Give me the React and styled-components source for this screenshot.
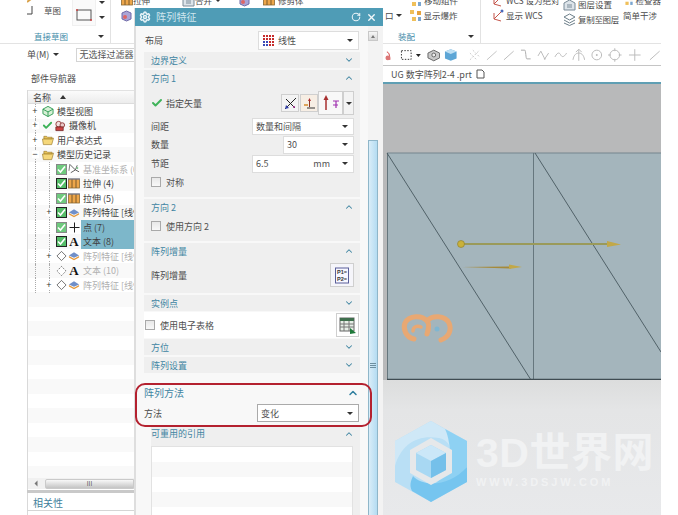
import React from 'react';
import styled, { createGlobalStyle } from 'styled-components';
import { Settings, RotateCw, X, ChevronDown, ChevronUp, Check } from 'lucide-react';

const Global = createGlobalStyle`
  html, body { margin: 0; padding: 0; background: #fff; }
  #root { width: 678px; height: 515px; overflow: hidden; }
  * { box-sizing: border-box; }
`;

const FONT = `"Noto Sans CJK SC", "Liberation Sans", sans-serif`;

const Page = styled.div`
  position: relative; width: 678px; height: 515px; overflow: hidden; background: #fff;
  font-family: ${FONT}; font-size: 9px; color: #4a4a4a; line-height: 1;
  display: flex; flex-direction: column;
`;

/* ribbon */
const Ribbon = styled.div`
  height: 44px; width: 661px; flex: none; display: flex; overflow: hidden; border-bottom: 1px solid #e3e3e3; font-size: 8.5px;
`;
const Group = styled.div`
  width: ${p => p.$w}px; flex: none; height: 51px; margin-top: -7px; display: flex; flex-direction: column;
  border-right: ${p => (p.$sep ? '1px solid #e2e2e2' : 'none')}; position: relative;
  padding-left: ${p => p.$pl || 0}px;
`;
const GroupBody = styled.div`
  height: 35px; display: flex; flex: none;
`;
const ToolCol = styled.div`
  width: ${p => p.$w}px; flex: none; display: flex; flex-direction: column; padding-top: ${p => p.$pt || 0}px;
`;
const ToolRow = styled.div`
  height: 15px; display: flex; align-items: center; gap: ${p => p.$gap ?? 2}px; white-space: nowrap; color: #4b4b4b;
  padding-left: ${p => p.$pl || 0}px;
`;
const Spacer = styled.span`
  width: ${p => p.$w}px; flex: none;
`;
const GroupLabel = styled.div`
  height: 16px; display: flex; align-items: center; color: #3e8aa8; padding-left: ${p => p.$pl || 0}px;
`;
const Grow = styled.span` flex: 1; `;
const Caret = styled.span`
  width: 0; height: 0; border-left: 3px solid transparent; border-right: 3px solid transparent;
  border-top: 3px solid #333; display: inline-block; flex: none; margin-right: ${p => p.$mr || 0}px; margin-left: ${p => p.$ml || 0}px;
`;
const SketchBtn = styled.div`
  width: 39px; flex: none; display: flex; flex-direction: column; align-items: center; padding-top: 13px;
  padding-left: 0;
`;
const RectBtn = styled.div`
  width: 24px; height: 33px; flex: none; background: #fafafa; border: 1px solid #f0f0f0; display: flex;
  align-items: center; justify-content: center; padding-top: 9px;
`;
const Arrows = styled.div`
  width: 12px; display: flex; flex-direction: column; align-items: center; gap: 12px; padding-top: 8px;
`;

/* work area */
const Work = styled.div`
  flex: 1; display: flex; min-height: 0;
`;
const Navigator = styled.div`
  width: 134px; flex: none; display: flex; flex-direction: column; padding-left: 27px;
`;
const MenuRow = styled.div`
  height: 21px; padding: 0; display: flex; align-items: center; gap: 4px; flex: none; white-space: nowrap;
`;
const FilterBox = styled.div`
  width: 70px; height: 14px; margin-left: 13px; border: 1px solid #d4d4d4; color: #555; padding: 0 2px;
  display: flex; align-items: center; white-space: nowrap; overflow: hidden; flex: none;
`;
const NavTitle = styled.div`
  height: 25px; flex: none; display: flex; align-items: center; padding-left: 4px; padding-top: 1px; color: #4a4a4a;
`;
const NavBox = styled.div`
  flex: 1; display: flex; flex-direction: column; border-left: 1px solid #d9d9d9; min-height: 0;
`;
const ColHead = styled.div`
  height: 14px; flex: none; display: flex; align-items: center; gap: 9px; padding-left: 5px;
  background: linear-gradient(#fbfbfb, #ececec); border-top: 1px solid #e2e2e2; border-bottom: 1px solid #dcdcdc;
`;
const UpTri = styled.span`
  width: 0; height: 0; border-left: 3px solid transparent; border-right: 3px solid transparent;
  border-bottom: 4px solid #333;
`;
const Tree = styled.div`
  height: 374px; flex: none; overflow: hidden;
  background: repeating-linear-gradient(#fff 0 14.5px, #f9f9f9 14.5px 29px);
`;
const Row = styled.div`
  height: 14.5px; display: flex; align-items: center; white-space: nowrap;
`;
const Guide = styled.span`
  width: 14px; height: 100%; flex: none; position: relative; display: flex; align-items: center; justify-content: center;
  &::before {
    content: ''; position: absolute; left: 7px; top: 0; bottom: 0;
    border-left: 1px dotted ${p => (p.$on ? '#aaa' : 'transparent')};
  }
`;
const Expander = styled.span`
  position: relative; z-index: 1; width: 7px; height: 7px; background: #fff; display: block;
  color: #333; font-size: 9px; line-height: 7px; text-align: center; font-family: "Liberation Sans", sans-serif;
`;
const RowIcon = styled.span`
  width: ${p => p.$w || 12}px; height: 12px; flex: none; display: flex; align-items: center; justify-content: center;
  margin-right: 1px;
`;
const RowText = styled.span`
  padding: 2px; flex: 1; color: ${p => (p.$dim ? '#b0b0b0' : '#3f3f3f')};
  background: ${p => (p.$sel ? '#7db7ca' : 'transparent')}; height: 14.5px; display: flex; align-items: center; overflow: hidden;
`;
const HScroll = styled.div`
  height: 11px; flex: none; display: flex; align-items: center; background: #f1f1f1; padding-left: 5px; gap: 6px;
`;
const HThumb = styled.div`
  flex: 1; height: 10px; background: linear-gradient(#f8f8f8, #c4c4c4); border: 1px solid #cacaca; color: #555;
  border-radius: 2px 0 0 2px; display: flex; align-items: center; justify-content: center; font-size: 6px;
`;
const Splitter = styled.div`
  height: 3px; flex: none; background: #c9c9c9; margin: 1px 0 0 -1px;
`;
const SideTab = styled.div`
  height: 18px; flex: none; margin: 0 0 0 -1px; border-bottom: 1px solid #d5d5d5; color: #3f7f9c; font-size: 10px;
  display: flex; align-items: center; padding: 3px 0 0 6px;
`;

/* graphics */
const Graphics = styled.div`
  width: 527px; flex: none; display: flex; flex-direction: column; min-height: 0; position: relative;
`;
const Strip = styled.div`
  height: 22px; flex: none; padding: 0 0 0 250px; display: flex; align-items: center; gap: 3px; border-bottom: 1px solid #c5c5c5; width: 527px; overflow: hidden;
`;
const Tabs = styled.div`
  height: 16px; flex: none; padding-left: 257px; display: flex; align-items: center; gap: 4px; color: #505050; font-size: 9px;
`;
const Canvas = styled.div`
  flex: 1; display: flex; flex-direction: column; border-top: 2px solid #5f9fb4; min-height: 0;
  background: #e4e5e7;
`;
const Model = styled.svg`
  display: block; width: 527px; height: 296px; flex: none;
`;
const Lower = styled.div`
  flex: 1; background: linear-gradient(#dcdddd, #e4e5e6 30px, #e8e9eb);
`;
const Watermark = styled.div`
  position: absolute; left: 261px; top: 377px; display: flex; gap: 9px; pointer-events: none;
`;
const MarkText = styled.div`
  display: flex; flex-direction: column; padding-top: 10px;
`;
const MarkBig = styled.div`
  font-family: "Liberation Sans", "Noto Sans CJK SC", sans-serif; font-weight: 700; font-size: 41px; line-height: 44px; color: #f1f2f3; white-space: nowrap;
  letter-spacing: 0.5px;
`;
const MarkUrl = styled.div`
  font-family: "Liberation Sans", sans-serif; font-size: 11px; line-height: 12px; color: #f1f2f3; letter-spacing: 2.9px; white-space: nowrap; font-weight: 700; margin-top: 1px;
`;

/* dialog */
const Dialog = styled.div`
  position: absolute; left: 134px; top: 8px; width: 249px; height: 507px; display: flex; flex-direction: column;
  background: #f8f8f8; border-left: 2px solid #dedede;
`;
const TitleBar = styled.div`
  height: 18px; flex: none; margin-left: -1px; background: #4f9cb6; color: #cfe6ee; display: flex; align-items: center; padding: 0 6px 0 4px; font-size: 10px; gap: 5px;
`;
const TitleText = styled.span` flex: 1; letter-spacing: 0.2px; `;
const DialogBody = styled.div`
  flex: 1; display: flex; min-height: 0;
`;
const Content = styled.div`
  width: 232px; flex: none; padding: 5px 8px 0 8px; display: flex; flex-direction: column;
`;
const FieldRow = styled.div`
  height: ${p => p.$h || 19}px; flex: none; display: flex; align-items: center; justify-content: space-between;
  padding-right: ${p => p.$pr || 0}px; padding-left: ${p => p.$pl || 0}px; margin-top: ${p => p.$mt || 0}px;
`;
const Select = styled.div`
  width: ${p => p.$w}px; height: ${p => p.$h || 18}px; flex: none; background: #fff; border: 1px solid ${p => (p.$dark ? '#aaa' : '#ddd')};
  display: flex; align-items: center; padding: 0 5px 0 3px; gap: 3px; color: #505050; white-space: nowrap;
`;
const SelectText = styled.span` flex: 1; display: flex; align-items: center; gap: 3px; `;
const Unit = styled.span` margin-right: 9px; `;
const Section = styled.section`
  background: #efefef; margin-top: ${p => p.$mt ?? 2}px; height: ${p => p.$h}px; flex: none; padding: 0 6px 0 7px;
`;
const SectionHead = styled.div`
  height: ${p => p.$h || 16}px; display: flex; align-items: center; justify-content: space-between; color: #3f85a2;
  font-size: 9px;
`;
const Body = styled.div`
  display: flex; flex-direction: column; padding-top: 3px;
`;
const VectorTools = styled.div`
  display: flex; align-items: center;
`;
const IconBtn = styled.div`
  width: ${p => p.$w || 18}px; height: ${p => p.$h || 18}px; flex: none; border: 1px solid #cfcfcf; background: ${p => p.$bg || '#f3f3f3'};
  display: flex; align-items: center; justify-content: center; margin-right: ${p => p.$mr || 0}px;
`;
const CheckLine = styled.label`
  display: flex; align-items: center; gap: 5px; color: #505050; height: ${p => p.$h || 14}px; flex: none; padding-left: ${p => p.$pl || 0}px;
`;
const Box = styled.span`
  width: 10px; height: 10px; flex: none; border: 1px solid #a9a9a9; background: linear-gradient(#e8e8e8, #f8f8f8);
`;
const WhiteRow = styled.div`
  height: 26px; background: #fff; margin-top: 1px; display: flex; align-items: center; justify-content: space-between; padding-right: 1px; flex: none;
`;
const Annotated = styled.section`
  position: relative; z-index: 1; flex: none; width: 237px; height: 44px; margin: 10px 0 0 -9px; padding: 0 11px 0 7px;
  border: 2px solid #b4212f; border-radius: 10px;
`;
const AnnotatedHead = styled.div`
  height: 16px; display: flex; align-items: center; justify-content: space-between; color: #3f85a2; font-size: 10px;
`;
const RefSection = styled.section`
  flex: 1; background: #efefef; margin: 0 0 0 7px; min-height: 0; width: 209px; padding-top: 1px;
`;
const RefHead = styled.div`
  height: 11px; display: flex; align-items: center; justify-content: space-between; color: #3f85a2; padding-right: 6px;
`;
const RefList = styled.div`
  height: 80px; width: 202px; margin-top: 7px; background: repeating-linear-gradient(#fff 0 15px, #f8f8f8 15px 30px); border: 1px solid #e2e2e2;
`;
const ScrollCol = styled.div`
  width: 15px; flex: none; display: flex; flex-direction: column; padding: 5px 0 0 0; background: #f3f3f3;
`;
const ScrollUp = styled.div`
  width: 10px; height: 10px; background: linear-gradient(#f6f6f6, #d9d9d9); border: 1px solid #c8c8c8; display: flex; align-items: center; justify-content: center; flex: none;
`;
const ThumbUp = styled.span`
  width: 0; height: 0; border-left: 2px solid transparent; border-right: 2px solid transparent; border-bottom: 3px solid #777;
`;
const Thumb = styled.div`
  width: 10px; flex: 1; margin-top: 99px; background: linear-gradient(90deg, #d9edf8, #b4dcf2); border: 1px solid #8fb6c9; border-bottom: 0;
  display: flex; flex-direction: column; align-items: center; padding-top: 222px; gap: 1px;
`;
const Grip = styled.span` width: 6px; height: 1px; background: #6d8f9f; flex: none; `;
const GlyphA = styled.span`
  font-family: "Liberation Serif", serif; font-weight: 700; font-size: 13px; color: #111;
`;
const VectorLabel = styled.span`
  display: flex; align-items: center; gap: 3px;
`;

/* icons */
const Tick = ({ dim }) => (
  <svg width="11" height="11" viewBox="0 0 11 11">
    <rect x=".5" y=".5" width="10" height="10" fill={dim ? '#6fca7e' : '#55bd68'} stroke={dim ? '#888' : '#222'} />
    <path d="M2 5.500 4.500 8 9 2.500" fill="none" stroke="#fff" strokeWidth="1.600" />
  </svg>
);
const Diamond = ({ dash }) => (
  <svg width="12" height="12" viewBox="0 0 12 12">
    <path d="M6 1 11 6 6 11 1 6Z" fill="#fff" stroke="#444" strokeWidth=".8" strokeDasharray={dash ? '1.500 1.200' : undefined} />
  </svg>
);
const Folder = () => (
  <svg width="13" height="12" viewBox="0 0 13 12">
    <path d="M2 2h3l1 1h5v2H2Z" fill="#e8c35a" stroke="#8a6a1e" strokeWidth=".6" />
    <path d="M.5 5h10l2-1-2 7h-9Z" fill="#f5d77a" stroke="#9a7a26" strokeWidth=".7" />
  </svg>
);
const Cube3 = () => (
  <svg width="13" height="12" viewBox="0 0 13 12">
    <path d="M6.500 1 12 4v5l-5.500 3L1 9V4Z" fill="#d7f0d6" stroke="#2f9a52" />
    <path d="M1 4l5.500 3L12 4M6.500 7v5" fill="none" stroke="#2f9a52" />
  </svg>
);
const Camera = () => (
  <svg width="13" height="12" viewBox="0 0 13 12">
    <circle cx="5" cy="4" r="3" fill="#f2e0e0" stroke="#913a3a" strokeWidth="1" />
    <circle cx="9" cy="5" r="2.500" fill="#e9c9c9" stroke="#913a3a" strokeWidth="1" />
    <path d="M2 7h8v4H2Z" fill="#c44" stroke="#6d2020" strokeWidth=".8" />
  </svg>
);
const Extrude = () => (
  <svg width="12" height="11" viewBox="0 0 12 11">
    <rect x=".5" y="1" width="11" height="9" fill="#eda64a" stroke="#8b6a33" strokeWidth=".8" />
    <path d="M4 1v9M8 1v9" stroke="#7a5a2a" strokeWidth="1" />
    <path d="M0 1h12" stroke="#6f7fa6" strokeWidth="1" />
  </svg>
);
const PatternIco = () => (
  <svg width="13" height="10" viewBox="0 0 13 10">
    <path d="M6.500 1 12 4.500 6.500 7 1 4.500Z" fill="#6f8fc9" />
    <path d="M1 5l5.500 3L12 5v1.500L6.500 9.500 1 6.500Z" fill="#e39a3f" />
  </svg>
);
const Csys = () => (
  <svg width="13" height="12" viewBox="0 0 13 12">
    <path d="M2 1 8 7 3 10M8 7l4 2M8 7l2-5" fill="none" stroke="#555" strokeWidth="1" />
    <path d="M2 1 1 8" stroke="#777" strokeWidth="1" />
    <circle cx="10" cy="5" r="1.200" fill="#7fc38c" />
  </svg>
);
const Plus = () => (
  <svg width="11" height="11" viewBox="0 0 11 11"><path d="M.5 5.500h10M5.500.5v10" stroke="#222" strokeWidth="1" /></svg>
);

const rows = [
  { l: 0, exp: '+', ic: <Cube3 />, t: '模型视图' },
  { l: 0, exp: '+', pre: <Check size={11} color="#3bb157" strokeWidth={4} />, ic: <Camera />, t: '摄像机' },
  { l: 0, exp: '+', ic: <Folder />, t: '用户表达式' },
  { l: 0, exp: '−', ic: <Folder />, t: '模型历史记录' },
  { l: 1, pre: <Tick dim />, ic: <Csys />, t: '基准坐标系 (0)', dim: true },
  { l: 1, pre: <Tick />, ic: <Extrude />, t: '拉伸 (4)' },
  { l: 1, pre: <Tick dim />, ic: <Extrude />, t: '拉伸 (5)' },
  { l: 1, exp: '+', pre: <Tick />, ic: <PatternIco />, t: '阵列特征 [线性]' },
  { l: 1, pre: <Tick dim />, ic: <Plus />, t: '点 (7)', sel: true },
  { l: 1, pre: <Tick />, ic: <GlyphA>A</GlyphA>, t: '文本 (8)', sel: true },
  { l: 1, exp: '+', pre: <Diamond />, ic: <PatternIco />, t: '阵列特征 [线性]', dim: true },
  { l: 1, pre: <Diamond dash />, ic: <GlyphA>A</GlyphA>, t: '文本 (10)', dim: true },
  { l: 1, exp: '+', pre: <Diamond />, ic: <PatternIco />, t: '阵列特征 [线性]', dim: true },
];

const stripIcons = [
  <svg width="13" height="14" key="a" viewBox="0 0 13 14"><path d="M3 4c2 0 3 3 3 8" stroke="#c33" fill="none" /><circle cx="4" cy="10" r="2.500" fill="#d77" /></svg>,
  <svg width="13" height="14" key="b" viewBox="0 0 13 14"><rect x="1.500" y="2.500" width="10" height="9" fill="none" stroke="#333" strokeDasharray="1.500 1.500" /></svg>,
  <svg width="7" height="14" key="c" viewBox="0 0 7 14"><path d="M1 6h5L3.500 9Z" fill="#222" /></svg>,
  <svg width="14" height="14" key="d" viewBox="0 0 14 14" style={{ marginLeft: 2 }}><path d="M1 5 7 2l6 3v5l-6 3-6-3Z" fill="#c9c9c9" stroke="#666" /><circle cx="7" cy="7" r="2" fill="#eee" stroke="#666" /></svg>,
  <svg width="14" height="14" key="e" viewBox="0 0 14 14" style={{ marginLeft: 1 }}><path d="M1 3.500 7 1l6 2.500v7L7 13l-6-2.500Z" fill="#5da6d6" /><path d="M1 3.500 7 6l6-2.500L7 1Z" fill="#bfe0f4" /></svg>,
  <svg width="14" height="14" key="f" viewBox="0 0 14 14" style={{ marginLeft: 7 }}><path d="M2 12 12 2M2 5l7 7M5 2l7 7" stroke="#c9c9c9" strokeDasharray="2 1.500" /></svg>,
  <svg width="14" height="14" key="g" viewBox="0 0 14 14"><path d="M2 12 12 3" stroke="#c3c3c3" /></svg>,
  <svg width="14" height="14" key="h" viewBox="0 0 14 14" style={{ marginLeft: 2 }}><path d="M1 12 11 3" stroke="#bbb" /></svg>,
  <svg width="12" height="14" key="i" viewBox="0 0 12 14"><path d="M1 2h4c1 0 1 9 2 9h4" fill="none" stroke="#aaa" /></svg>,
  <svg width="14" height="14" key="j" viewBox="0 0 14 14" style={{ marginLeft: 3 }}><path d="M1 8 4 3l4 8 4-6" fill="none" stroke="#bbb" /><circle cx="8" cy="11" r="1" fill="#bbb" /></svg>,
  <svg width="14" height="14" key="k" viewBox="0 0 14 14"><path d="M1 9c3-6 5-4 6-2s3 3 6-2" fill="none" stroke="#bbb" /></svg>,
  <svg width="14" height="14" key="l" viewBox="0 0 14 14" style={{ marginLeft: 2 }}><path d="M1 12c1-6 4-7 6-7s5 1 6 7M7 1v12M4 4l3-3 3 3" fill="none" stroke="#bbb" /></svg>,
  <svg width="14" height="14" key="m" viewBox="0 0 14 14" style={{ marginLeft: 1 }}><circle cx="7" cy="7" r="5" fill="none" stroke="#bbb" /><circle cx="7" cy="7" r="1" fill="#bbb" /></svg>,
  <svg width="14" height="14" key="n" viewBox="0 0 14 14" style={{ marginLeft: 2 }}><circle cx="7" cy="7" r="5" fill="none" stroke="#bbb" /><path d="M7 0v3M7 11v3M0 7h3M11 7h3" stroke="#bbb" /></svg>,
  <svg width="14" height="14" key="o" viewBox="0 0 14 14" style={{ marginLeft: 3 }}><path d="M7 1v12M1 7h12" stroke="#bbb" /></svg>,
  <svg width="14" height="14" key="p" viewBox="0 0 14 14" style={{ marginLeft: 3 }}><path d="M2 12 12 3" stroke="#bbb" /></svg>,
];

const Mini = ({ kind }) => {
  if (kind === 'layer') return <svg width="13" height="13" viewBox="0 0 13 13"><path d="M1 5 6.500 2 12 5v7H1Z" fill="#dde4ea" stroke="#7a8b98" /><path d="M4 7h5M4 9h5" stroke="#7a8b98" /></svg>;
  if (kind === 'copy') return <svg width="13" height="13" viewBox="0 0 13 13"><path d="M1 4 6.500 1 12 4 6.500 7ZM1 7l5.500 3L12 7M1 10l5.500 2.500L12 10" fill="none" stroke="#6d7f8a" /></svg>;
  if (kind === 'wcs') return <svg width="13" height="13" viewBox="0 0 13 13"><path d="M3 10 11 2M3 10v-6M3 10l7 2" fill="none" stroke="#c4554a" /><circle cx="11" cy="2" r="1.500" fill="#4a68b8" /></svg>;
  if (kind === 'burst') return <svg width="13" height="13" viewBox="0 0 13 13"><rect x="1" y="1" width="4" height="4" fill="#f0c05a" /><rect x="8" y="2" width="4" height="4" fill="#e7a33e" /><rect x="3" y="8" width="4" height="4" fill="#f0c05a" /><rect x="9" y="8" width="3" height="4" fill="#7ba6d0" /></svg>;
  if (kind === 'box') return <svg width="11" height="13" viewBox="0 0 11 13"><path d="M1 4 5.500 2 10 4v6l-4.500 2L1 10Z" fill="#a9a4d6" stroke="#6f6aa8" /><circle cx="4" cy="8" r="2" fill="#d66" /></svg>;
  return null;
};

const GridIco = () => (
  <svg width="13" height="13" viewBox="0 0 13 13">
    {[1, 4, 7, 10].map(x => [1, 4, 7, 10].map(y => <rect key={`${x}${y}`} x={x} y={y} width="2" height="2" fill={x < 7 && y > 6 ? '#3a49b8' : '#c72b2b'} />))}
  </svg>
);

export default function App() {
  return (
    <Page>
      <Global />
      <Ribbon>
        <Group $w={111} $sep $pl={27}>
          <GroupBody>
            <svg width="6" height="35" viewBox="0 0 6 35"><path d="M5 13v8H0" fill="none" stroke="#444" /><path d="M0 9l4-3" stroke="#d9a24a" strokeWidth="2" /></svg>
            <SketchBtn>草图</SketchBtn>
            <RectBtn>
              <svg width="18" height="13" viewBox="0 0 18 13"><rect x="2" y="2" width="14" height="10" fill="none" stroke="#555" /><circle cx="2" cy="2" r="1" fill="#c44" /><circle cx="16" cy="12" r="1" fill="#c44" /></svg>
            </RectBtn>
            <Arrows><Caret /><Caret /></Arrows>
          </GroupBody>
          <GroupLabel $pl={7}>直接草图<Grow /><Caret $mr={6} /></GroupLabel>
        </Group>
        <Group $w={272} $pl={10}>
          <GroupBody>
            <ToolCol $w={260}>
              <ToolRow $gap={0}>
                <Extrude /><span>拉伸</span>
                <Spacer $w={32} />
                <Mini kind="layer" /><span>合并</span><Caret $ml={3} />
                <Spacer $w={18} />
                <Mini kind="box" />
                <Spacer $w={13} />
                <Extrude /><Spacer $w={3} /><span>修剪体</span>
              </ToolRow>
              <ToolRow><Mini kind="box" /></ToolRow>
            </ToolCol>
          </GroupBody>
        </Group>
        <Group $w={98} $sep $pl={2}>
          <GroupBody>
            <ToolCol $w={96}>
              <ToolRow $pl={24}><Mini kind="burst" /><span>移动组件</span></ToolRow>
              <ToolRow $gap={0}><span>口</span><Caret $ml={2} /><Spacer $w={7} /><Mini kind="burst" /><Spacer $w={2} /><span>显示爆炸</span></ToolRow>
            </ToolCol>
          </GroupBody>
          <GroupLabel $pl={13}>装配<Grow /><Caret $mr={6} /></GroupLabel>
        </Group>
        <Group $w={80} $pl={8}>
          <GroupBody>
            <ToolCol $w={72}>
              <ToolRow $pl={2}><Mini kind="wcs" /><span>WCS 设为绝对</span></ToolRow>
              <ToolRow $pl={2}><Mini kind="wcs" /><span>显示 WCS</span></ToolRow>
            </ToolCol>
          </GroupBody>
        </Group>
        <Group $w={62}>
          <GroupBody>
            <ToolCol $w={62} $pt={4}>
              <ToolRow $pl={2}><Mini kind="layer" /><span>图层设置</span></ToolRow>
              <ToolRow $pl={2}><Mini kind="copy" /><span style={{ letterSpacing: -0.3 }}>复制至图层</span></ToolRow>
            </ToolCol>
          </GroupBody>
        </Group>
        <Group $w={38}>
          <GroupBody>
            <ToolCol $w={38}>
              <ToolRow><Mini kind="burst" /><span>检查器</span></ToolRow>
              <ToolRow><span>简单干涉</span></ToolRow>
            </ToolCol>
          </GroupBody>
        </Group>
      </Ribbon>

      <Work>
        <Navigator>
          <MenuRow>单(M) <Caret /><FilterBox>无选择过滤器</FilterBox></MenuRow>
          <NavTitle>部件导航器</NavTitle>
          <NavBox>
            <ColHead>名称 <UpTri /></ColHead>
            <Tree>
              {rows.map((r, i) => (
                <Row key={i}>
                  <Guide $on>{r.l === 0 ? <Expander>{r.exp}</Expander> : null}</Guide>
                  {r.l === 1 && <Guide $on>{r.exp ? <Expander>{r.exp}</Expander> : null}</Guide>}
                  {r.pre && <RowIcon $w={11}>{r.pre}</RowIcon>}
                  <RowIcon $w={12}>{r.ic}</RowIcon>
                  <RowText $dim={r.dim} $sel={r.sel}>{r.t}</RowText>
                </Row>
              ))}
            </Tree>
            <HScroll>
              <Caret style={{ transform: 'rotate(90deg)', borderTopColor: '#777' }} />
              <HThumb>III</HThumb>
            </HScroll>
            <Splitter />
            <SideTab>相关性</SideTab>
          </NavBox>
        </Navigator>

        <Graphics>
          <Strip>{stripIcons}</Strip>
          <Tabs>
            <span>UG 数字阵列2-4 .prt</span>
            <svg width="9" height="10" viewBox="0 0 9 10"><path d="M1 1h5l2 2v6H1Z" fill="#fff" stroke="#555" /></svg>
          </Tabs>
          <Canvas>
            <Model viewBox="134 84 527 296">
              <rect x="134" y="84" width="527" height="70" fill="#b8b9ba" />
              <rect x="387" y="153" width="274" height="227" fill="#a4b5bc" />
              <rect x="134" y="153" width="253" height="227" fill="#b8b9ba" />
              <path d="M387 153H661" stroke="#75868e" strokeWidth="1.200" />
              <path d="M387.500 153V380M533.500 153V380" stroke="#66777e" strokeWidth="1" />
              <path d="M387 153 531 380M535 153 661 352" stroke="#47585f" strokeWidth=".9" fill="none" />
              <path d="M387 379.500H661" stroke="#3f4c52" strokeWidth="1.500" />
              <path d="M461 244H608" stroke="#9a9a5a" strokeWidth="2" />
              <path d="M607 241 621 244.500 607 247Z" fill="#c2a848" />
              <circle cx="461" cy="244" r="3.500" fill="#c9b13a" stroke="#8a7a2a" strokeWidth=".6" />
              <path d="M462 267 511 266.500V268.500Z" fill="#a58a3a" />
              <path d="M509 264.500 522 267 509 269Z" fill="#c2a848" />
              <g fill="none" stroke="#e8a873" strokeWidth="5" strokeLinecap="round">
                <path d="M414 339C405 337 403 328 405 323 409 315 422 315 427 321 430 324 428 331 427 334" />
                <path d="M427 321C432 315 445 315 449 323 452 330 449 337 441 340" />
                <path d="M413 331C413 327 417 325 421 327" strokeWidth="3.500" />
              </g>
              <circle cx="437" cy="329" r="2.500" fill="#7fb6d2" />
            </Model>
            <Lower />
          </Canvas>
          <Watermark>
            <svg width="72" height="81" viewBox="0 0 72 81">
              <path d="M36 0 72 20V61L36 81 0 61V20Z" fill="#b9dff5" />
              <path d="M36 0 0 20V45C6 24 22 13 44 17 54 19 58 28 56 40 60 30 60 12 48 7Z" fill="#cfe8f7" />
              <path d="M50 8 72 20V46C66 56 54 64 36 65 50 58 58 40 54 22 53 16 52 12 50 8Z" fill="#8ed1f3" />
              <path d="M72 46V61L36 81 17 70C14 64 16 60 18 55 28 66 54 66 72 46Z" fill="#76c5ef" />
              <path d="M36 17 57 29V52L36 64 15 52V29Z" fill="#e6e8ea" />
              <path d="M36 24 51 32V49L36 57 21 49V32Z" fill="#a8d8f3" />
              <path d="M36 24 51 32 36 40 21 32Z" fill="#cbe7f8" />
              <path d="M51 32V49L36 57V40Z" fill="#75c0ea" />
            </svg>
            <MarkText>
              <MarkBig>3D世界网</MarkBig>
              <MarkUrl>WWW.3DSJW.COM</MarkUrl>
            </MarkText>
          </Watermark>
        </Graphics>
      </Work>

      <Dialog>
        <TitleBar>
          <Settings size={12} color="#e8f3f7" strokeWidth={3} />
          <TitleText>阵列特征</TitleText>
          <RotateCw size={10} color="#e8f3f7" strokeWidth={2.5} />
          <X size={11} color="#f2f8fa" strokeWidth={3} />
        </TitleBar>
        <DialogBody>
          <Content>
            <FieldRow $h={19} $pr={1} $pl={1}>
              布局
              <Select $w={101} $h={19}>
                <SelectText><GridIco /> 线性</SelectText><Caret />
              </Select>
            </FieldRow>
            <Section $h={16}><SectionHead>边界定义<ChevronDown size={10} strokeWidth={2.5} /></SectionHead></Section>
            <Section $h={127}>
              <SectionHead>方向 1<ChevronUp size={10} strokeWidth={2.5} /></SectionHead>
              <Body>
                <FieldRow $h={28}>
                  <VectorLabel><Check size={12} color="#3fb35a" strokeWidth={4} /> 指定矢量</VectorLabel>
                  <VectorTools>
                    <IconBtn $mr={1}>
                      <svg width="13" height="13" viewBox="0 0 13 13"><path d="M1 12 12 1M2 2l9 9" stroke="#222" /><path d="M1 12l1-4 3 3Z" fill="#3340a8" /><circle cx="10" cy="10" r="1" fill="#a03090" /></svg>
                    </IconBtn>
                    <IconBtn $bg="#f7eee4">
                      <svg width="13" height="13" viewBox="0 0 13 13"><path d="M6.500 2v8" stroke="#8a3020" /><path d="M1 8h4" stroke="#d58a2a" strokeWidth="1.500" /><path d="M4 11h8" stroke="#333" /><path d="M6.500 1 5 4h3Z" fill="#b03030" /></svg>
                    </IconBtn>
                    <IconBtn $w={25} $h={24} $bg="#f8f8f8">
                      <svg width="18" height="16" viewBox="0 0 18 16"><path d="M4 15V3" stroke="#a83030" strokeWidth="1.500" /><path d="M4 0 1.500 5h5Z" fill="#a83030" /><path d="M11 6h6M14 6v7" stroke="#a030b0" strokeWidth="1.200" /><path d="M11 10h5" stroke="#a030b0" /></svg>
                    </IconBtn>
                    <IconBtn $w={11} $h={24}><Caret /></IconBtn>
                  </VectorTools>
                </FieldRow>
                <FieldRow $h={18}>间距<Select $w={102} $h={17}><SelectText>数量和间隔</SelectText><Caret /></Select></FieldRow>
                <FieldRow $h={19}>数量<Select $w={71}><SelectText>30</SelectText><Caret /></Select></FieldRow>
                <FieldRow $h={19}>节距<Select $w={102}><SelectText>6.5</SelectText><Unit>mm</Unit><Caret /></Select></FieldRow>
                <CheckLine $h={18}><Box /> 对称</CheckLine>
              </Body>
            </Section>
            <Section $h={42}>
              <SectionHead>方向 2<ChevronUp size={10} strokeWidth={2.5} /></SectionHead>
              <CheckLine $h={22}><Box /> 使用方向 2</CheckLine>
            </Section>
            <Section $h={50}>
              <SectionHead>阵列增量<ChevronUp size={10} strokeWidth={2.5} /></SectionHead>
              <FieldRow $h={32}>
                阵列增量
                <IconBtn $w={24} $h={24} $bg="#f5f5fa">
                  <svg width="16" height="17" viewBox="0 0 16 17"><rect x="1.500" y="1" width="13" height="15" fill="#f7f7ff" stroke="#5a5f9a" /><text x="3" y="7" fontSize="5.5" fontWeight="700" fill="#333" fontFamily="Liberation Sans">P1=</text><text x="3" y="13.500" fontSize="5.5" fontWeight="700" fill="#333" fontFamily="Liberation Sans">P2=</text></svg>
                </IconBtn>
              </FieldRow>
            </Section>
            <Section $h={16}><SectionHead>实例点<ChevronDown size={10} strokeWidth={2.5} /></SectionHead></Section>
            <WhiteRow>
              <CheckLine $pl={1}><Box /> 使用电子表格</CheckLine>
              <IconBtn $w={23} $h={24} $bg="#fff">
                <svg width="18" height="17" viewBox="0 0 18 17"><rect x="1" y="1" width="14" height="13" fill="#e7efe7" stroke="#666" /><rect x="1" y="1" width="14" height="3" fill="#3f6f4d" /><path d="M1 7h14M1 10h14M5 4v10M10 4v10" stroke="#777" /><path d="M11 11l6 5-6 1Z" fill="#1f7a3a" /></svg>
              </IconBtn>
            </WhiteRow>
            <Section $h={16} $mt={1}><SectionHead>方位<ChevronDown size={10} strokeWidth={2.5} /></SectionHead></Section>
            <Section $h={16}><SectionHead>阵列设置<ChevronDown size={10} strokeWidth={2.5} /></SectionHead></Section>
            <Annotated>
              <AnnotatedHead>阵列方法<ChevronUp size={12} strokeWidth={3} color="#2f7f9f" /></AnnotatedHead>
              <FieldRow $h={22} $mt={1}>方法<Select $w={102} $h={18} $dark><SelectText>变化</SelectText><Caret /></Select></FieldRow>
            </Annotated>
            <RefSection>
              <RefHead>可重用的引用<ChevronUp size={10} strokeWidth={2.5} /></RefHead>
              <RefList />
            </RefSection>
          </Content>
          <ScrollCol>
            <ScrollUp><ThumbUp /></ScrollUp>
            <Thumb><Grip /><Grip /><Grip /></Thumb>
          </ScrollCol>
        </DialogBody>
      </Dialog>
    </Page>
  );
}
